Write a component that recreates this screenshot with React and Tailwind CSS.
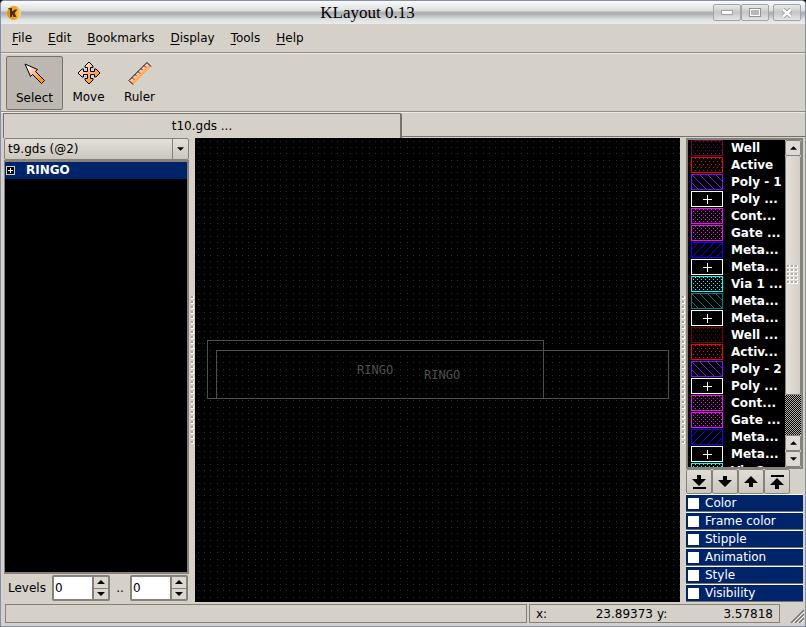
import React from "react";

const MENUS = ["File", "Edit", "Bookmarks", "Display", "Tools", "Help"];

const LAYERS = [
  { name: "Well", color: "#6a0848", fill: "sparse" },
  { name: "Active", color: "#ff0000", fill: "sparse" },
  { name: "Poly - 1", color: "#7a10ff", fill: "back" },
  { name: "Poly ...", color: "#ffffff", fill: "plus" },
  { name: "Cont...", color: "#ff00ff", fill: "dense" },
  { name: "Gate ...", color: "#ff00ff", fill: "dense" },
  { name: "Meta...", color: "#1400ff", fill: "forward" },
  { name: "Meta...", color: "#ffffff", fill: "plus" },
  { name: "Via 1 ...", color: "#00ffff", fill: "dense" },
  { name: "Meta...", color: "#008080", fill: "back" },
  { name: "Meta...", color: "#ffffff", fill: "plus" },
  { name: "Well ...", color: "#780000", fill: "sparse" },
  { name: "Activ...", color: "#ff0000", fill: "sparse" },
  { name: "Poly - 2", color: "#7a10ff", fill: "back" },
  { name: "Poly ...", color: "#ffffff", fill: "plus" },
  { name: "Cont...", color: "#ff00ff", fill: "dense" },
  { name: "Gate ...", color: "#ff00ff", fill: "dense" },
  { name: "Meta...", color: "#1400ff", fill: "forward" },
  { name: "Meta...", color: "#ffffff", fill: "plus" },
  { name: "Via 2 ...", color: "#00ffff", fill: "dense" },
];

const SECTIONS = ["Color", "Frame color", "Stipple", "Animation", "Style", "Visibility"];

function Swatch({ id, color, fill }) {
  return (
    <svg width="32" height="16" shapeRendering="crispEdges" className="shrink-0" aria-hidden="true">
      <defs>
        {fill === "sparse" && (
          <pattern id={id} width="4" height="6" patternUnits="userSpaceOnUse">
            <path d="M0 1h1v1h-1zM2 4h1v1h-1z" fill={color} />
          </pattern>
        )}
        {fill === "dense" && (
          <pattern id={id} width="4" height="4" patternUnits="userSpaceOnUse">
            <path d="M0 1h1v1h-1zM2 3h1v1h-1z" fill={color} />
          </pattern>
        )}
        {fill === "back" && (
          <pattern id={id} width="8" height="8" patternUnits="userSpaceOnUse">
            <path d="M0 0h1v1h1v1h1v1h1v1h1v1h1v1h1v1h1v1h-1v-1h-1v-1h-1v-1h-1v-1h-1v-1h-1v-1h-1v-1h-1z" fill={color} />
          </pattern>
        )}
        {fill === "forward" && (
          <pattern id={id} width="8" height="8" patternUnits="userSpaceOnUse">
            <path d="M7 0h1v1h-1v1h-1v1h-1v1h-1v1h-1v1h-1v1h-1v1h-1v-1h1v-1h1v-1h1v-1h1v-1h1v-1h1v-1h1z" fill={color} />
          </pattern>
        )}
      </defs>
      <rect x="0" y="0" width="32" height="16" fill={fill === "plus" ? "#000" : `url(#${id})`} />
      {fill === "plus" && <path d="M12 8h9v1h-9zM16 4h1v9h-1z" fill={color} />}
      <rect x="0.5" y="0.5" width="31" height="15" fill="none" stroke={color} />
    </svg>
  );
}

function Arrow({ up, small }) {
  return (
    <svg width={small ? 7 : 8} height="4" viewBox="0 0 8 4" aria-hidden="true">
      <path d={up ? "M0 4L4 0L8 4z" : "M0 0L4 4L8 0z"} fill="#000" />
    </svg>
  );
}

function Splitter({ id }) {
  return (
    <div className="flex w-1.5 shrink-0 items-center justify-center">
      <svg width="4" height="150" shapeRendering="crispEdges" aria-hidden="true">
        <defs>
          <pattern id={id} width="4" height="5" patternUnits="userSpaceOnUse">
            <rect x="1" y="1" width="3" height="3" fill="#fff" />
            <rect x="1" y="1" width="2" height="2" fill="#a5a19a" />
          </pattern>
        </defs>
        <rect width="4" height="150" fill={`url(#${id})`} />
      </svg>
    </div>
  );
}

function WindowButton({ label, children }) {
  return (
    <button
      aria-label={label}
      className="flex h-[17px] w-7 items-center justify-center rounded-xs border border-[#a2a5a6] bg-linear-to-b from-[#e9ebeb] via-[#c4c6c7] to-[#e4e6e6]"
    >
      {children}
    </button>
  );
}

function ToolButton({ label, active, children }) {
  return (
    <button
      className={
        active
          ? "flex h-[54px] w-[57px] flex-col items-center rounded-xs border border-[#77736c] bg-[#bcb8b1] pt-[5px]"
          : "flex h-[54px] w-[51px] flex-col items-center border border-transparent pt-1"
      }
    >
      {children}
      <span className="mt-1 leading-4">{label}</span>
    </button>
  );
}

function Spin({ label }) {
  return (
    <div className="flex h-[26px] w-[58px] rounded-xs border-2 border-[#86827a] bg-white">
      <input aria-label={label} defaultValue="0" className="w-[38px] min-w-0 bg-white px-px outline-none" />
      <div className="flex flex-1 flex-col border-l-2 border-[#86827a] bg-[#dbd8d2]">
        <button aria-label={`Increase ${label}`} className="flex flex-1 items-center justify-center border-b border-[#86827a]">
          <Arrow up />
        </button>
        <button aria-label={`Decrease ${label}`} className="flex flex-1 items-center justify-center">
          <Arrow />
        </button>
      </div>
    </div>
  );
}

function ScrollButton({ label, up }) {
  return (
    <button
      aria-label={label}
      className="flex h-4 w-full shrink-0 items-center justify-center rounded-xs border border-[#86827a] bg-[#dedbd5]"
    >
      <Arrow up={up} small />
    </button>
  );
}

const MOVES = [
  { label: "Move to bottom", d: "M6 0h4v4h5l-7 7l-7-7h5zM2 12h13v2h-13z" },
  { label: "Move down", d: "M6 1h4v4h5l-7 7l-7-7h5z" },
  { label: "Move up", d: "M8 1l7 7h-5v4h-4v-4h-5z" },
  { label: "Move to top", d: "M2 0h13v2h-13zM8 3l7 7h-5v4h-4v-4h-5z" },
];

export default function App() {
  return (
    <div className="h-screen w-full bg-black font-['DejaVu_Sans',sans-serif] text-xs text-black">
      <div className="flex h-full w-full flex-col overflow-hidden rounded-t-sm border border-[#858fa9] bg-[#d5d1c9]">
        <header className="flex h-[23px] shrink-0 items-center bg-[linear-gradient(to_bottom,#fafbfb_0%,#dcdedf_42%,#b0b2b4_48%,#adafb1_56%,#dfe2e3_80%,#e9ecec_100%)] pr-1 pl-[5px]">
          <svg width="16" height="16" viewBox="0 0 16 16" aria-hidden="true">
            <defs>
              <linearGradient id="logo">
                <stop offset="0" stopColor="#f08c00" />
                <stop offset="0.6" stopColor="#f5a51c" />
                <stop offset="1" stopColor="#f4dc98" />
              </linearGradient>
            </defs>
            <circle cx="8" cy="8" r="7" fill="url(#logo)" />
            <path d="M2 3h4v3.500l3-2h2.500l-3 3.500l2 4h-3l-1.500-3v3h-2v-7z" fill="#40321a" />
          </svg>
          <h1 className="flex-1 text-center font-['Liberation_Serif',serif] text-[17px] leading-5">KLayout 0.13</h1>
          <div className="flex">
            <WindowButton label="Minimize">
              <svg width="12" height="5"><rect x="0.500" y="0.500" width="11" height="4" fill="#fff" stroke="#a0a0a0" /></svg>
            </WindowButton>
            <WindowButton label="Maximize">
              <svg width="12" height="9">
                <rect x="1" y="1" width="10" height="7" fill="none" stroke="#8f9192" strokeWidth="2" />
                <rect x="1.500" y="1.500" width="9" height="6" fill="#b5b7b8" stroke="#fff" />
              </svg>
            </WindowButton>
            <div className="pl-1">
              <WindowButton label="Close">
                <svg width="12" height="10" viewBox="0 0 12 10">
                  <path d="M2 1.500L10 8.500M10 1.500L2 8.500" stroke="#8f9192" strokeWidth="4" />
                  <path d="M2 1.500L10 8.500M10 1.500L2 8.500" stroke="#fff" strokeWidth="2.400" />
                </svg>
              </WindowButton>
            </div>
          </div>
        </header>

        <nav className="flex h-[29px] shrink-0 items-center border-b border-[#918e86] pl-[3px]">
          {MENUS.map((m) => (
            <button key={m} className="px-2 leading-4">
              <span className="underline underline-offset-2">{m[0]}</span>
              {m.slice(1)}
            </button>
          ))}
        </nav>

        <div className="flex h-[59px] shrink-0 items-center border-t border-b border-t-[#eeebe5] border-b-[#918e86] pl-[5px]">
          <ToolButton label="Select" active>
            <svg width="24" height="24" viewBox="0 0 24 24" aria-hidden="true">
              <defs>
                <linearGradient id="warm" x1="0" y1="0" x2="1" y2="1">
                  <stop offset="0.150" stopColor="#fff4f0" />
                  <stop offset="0.500" stopColor="#ffb092" />
                  <stop offset="0.800" stopColor="#ff9c00" />
                </linearGradient>
              </defs>
              <path d="M2 2L14.500 7.500L12.500 9.500L21.500 18.500L18.500 21.500L9.500 12.500L7.500 14.500z" fill="url(#warm)" stroke="#000" />
            </svg>
          </ToolButton>
          <ToolButton label="Move">
            <svg width="24" height="24" viewBox="0 0 24 24" aria-hidden="true">
              <path
                d="M12 1L16 5V6.500H13.500V10.500H17.500V8H19L23 12L19 16H17.500V13.500H13.500V17.500H16V19L12 23L8 19V17.500H10.500V13.500H6.500V16H5L1 12L5 8H6.500V10.500H10.500V6.500H8V5z"
                fill="url(#warm)"
                stroke="#000"
              />
            </svg>
          </ToolButton>
          <ToolButton label="Ruler">
            <svg width="24" height="24" viewBox="0 0 24 24" aria-hidden="true">
              <defs>
                <linearGradient id="rule" x1="0.350" y1="0.350" x2="0.650" y2="0.650">
                  <stop offset="0" stopColor="#fff0ea" />
                  <stop offset="0.500" stopColor="#ffb48c" />
                  <stop offset="1" stopColor="#ff9c00" />
                </linearGradient>
              </defs>
              <path d="M19 1.500L23 5.500L5 23.500L1 19.500z" fill="url(#rule)" />
              <path d="M5 23.500L1 19.500L19 1.500L23 5.500" fill="none" stroke="#000" />
              <path d="M4 16.500l2 2M7 13.500l1.500 1.500M10 10.500l2 2M13 7.500l1.500 1.500M16 4.500l2 2" stroke="#000" strokeWidth="0.800" />
            </svg>
          </ToolButton>
        </div>

        <div className="flex h-[26px] shrink-0 border-t border-[#eeebe5] pl-0.5">
          <button className="w-[399px] rounded-tr-xs border-t border-r-2 border-l border-[#77736c] leading-4">t10.gds ...</button>
          <div className="mb-px flex-1 border-b border-[#77736c]" />
        </div>

        <main className="flex min-h-0 flex-1">
          <aside className="flex w-[188px] shrink-0 flex-col pl-[3px]">
            <div className="grid h-[22px] shrink-0 rounded-xs border border-[#86827a] bg-linear-to-b from-[#e3e0da] to-[#cbc7bf]">
              <select aria-label="Layout" className="col-start-1 row-start-1 appearance-none pr-5 pl-[3px] leading-4 outline-none">
                <option>t9.gds (@2)</option>
              </select>
              <span className="pointer-events-none col-start-1 row-start-1 flex w-4 items-center justify-center justify-self-end border-l border-[#86827a]">
                <Arrow small />
              </span>
            </div>
            <div className="min-h-0 flex-1 border-t-2 border-r-2 border-b-2 border-l border-[#86827a] bg-black">
              <button className="flex h-[17px] w-full items-start gap-[11px] bg-[#00246a] pl-px leading-4 font-bold text-white">
                <svg width="9" height="9" shapeRendering="crispEdges" className="mt-1" aria-hidden="true">
                  <rect x="0.500" y="0.500" width="8" height="8" fill="#000" stroke="#d5d1c9" />
                  <path d="M2 4h5v1h-5zM4 2h1v5h-1z" fill="#fff" />
                </svg>
                RINGO
              </button>
            </div>
            <div className="flex h-7 shrink-0 items-center justify-between pr-px pl-1">
              <span>Levels</span>
              <Spin label="from level" />
              <span>..</span>
              <Spin label="to level" />
            </div>
          </aside>

          <Splitter id="grip-left" />

          <svg className="h-full min-w-0 flex-1 bg-black" shapeRendering="crispEdges" role="img" aria-label="Layout view">
            <defs>
              <pattern id="grid" width="19" height="19" patternUnits="userSpaceOnUse">
                <path d="M3 3h1v1h-1zM9 3h1v1h-1zM15 3h1v1h-1zM3 9h1v1h-1zM9 9h1v1h-1zM15 9h1v1h-1zM3 15h1v1h-1zM9 15h1v1h-1zM15 15h1v1h-1z" fill="#303030" />
              </pattern>
            </defs>
            <rect width="100%" height="100%" fill="url(#grid)" />
            <g fill="none" stroke="#505050">
              <rect x="12.500" y="202.500" width="336" height="58" />
              <rect x="21.500" y="212.500" width="452" height="48" />
            </g>
            <g fill="#505050" className="font-['DejaVu_Sans_Mono',monospace] text-xs">
              <text x="162" y="236">RINGO</text>
              <text x="229" y="241">RINGO</text>
            </g>
          </svg>

          <Splitter id="grip-right" />

          <aside className="flex w-[119px] shrink-0 flex-col pr-0.5">
            <div className="flex min-h-0 flex-1 overflow-hidden border-2 border-[#86827a] bg-black">
              <ul className="min-w-0 flex-1 pl-[3px] font-bold text-white">
                {LAYERS.map((l, i) => (
                  <li key={i} className="flex h-[17px] items-start gap-2 overflow-hidden leading-4 whitespace-nowrap">
                    <Swatch id={`stipple-${i}`} color={l.color} fill={l.fill} />
                    {l.name}
                  </li>
                ))}
              </ul>
              <div className="flex w-4 shrink-0 flex-col bg-[#d5d1c9]">
                <ScrollButton label="Scroll up" up />
                <div className="flex flex-1 items-center justify-center rounded-xs border-x border-b border-[#86827a] bg-linear-to-r from-[#e3e0da] to-[#d3cfc7]">
                  <svg width="12" height="20" shapeRendering="crispEdges" aria-hidden="true">
                    <defs>
                      <pattern id="thumb" width="4" height="4" patternUnits="userSpaceOnUse">
                        <rect width="3" height="3" fill="#fff" />
                        <rect width="2" height="2" fill="#b0aca5" />
                      </pattern>
                    </defs>
                    <rect width="12" height="20" fill="url(#thumb)" />
                  </svg>
                </div>
                <svg width="16" height="40" shapeRendering="crispEdges" className="shrink-0" aria-hidden="true">
                  <defs>
                    <pattern id="trough" width="2" height="2" patternUnits="userSpaceOnUse">
                      <rect width="2" height="2" fill="#000" />
                      <path d="M0 0h1v1h-1zM1 1h1v1h-1z" fill="#b5b1aa" />
                    </pattern>
                  </defs>
                  <rect width="16" height="40" fill="url(#trough)" />
                </svg>
                <ScrollButton label="Page up" up />
                <ScrollButton label="Scroll down" />
              </div>
            </div>
            <div className="flex h-[25px] shrink-0">
              {MOVES.map((m) => (
                <button
                  key={m.label}
                  aria-label={m.label}
                  className="flex w-[26px] items-center justify-center rounded-xs border border-[#86827a] bg-linear-to-b from-[#e0ddd7] to-[#cbc7bf]"
                >
                  <svg width="16" height="14" aria-hidden="true">
                    <path d={m.d} fill="#000" />
                  </svg>
                </button>
              ))}
            </div>
            <div className="shrink-0">
              {SECTIONS.map((s) => (
                <label key={s} className="flex h-[18px] items-center gap-1.5 border-t border-b border-t-white border-b-[#77736c] bg-[#00246a] pl-0.5 leading-4 text-white">
                  <input type="checkbox" className="size-[11px] appearance-none bg-white checked:bg-[#86827a]" />
                  {s}
                </label>
              ))}
            </div>
          </aside>
        </main>

        <footer className="flex h-6 shrink-0 gap-0.5 pt-0.5 pb-[3px] pl-1">
          <div className="flex-1 border border-[#86827a]" />
          <div className="flex w-[251px] items-center border border-[#86827a] px-1.5 leading-4">
            <span>x:</span>
            <span className="flex-1 text-right">23.89373</span>
            <span className="pl-1">y:</span>
            <span className="flex-1 text-right">3.57818</span>
          </div>
          <div className="flex w-[23px] items-end justify-end pr-px">
            <svg width="14" height="14" aria-hidden="true">
              <path d="M1 14L14 1M5 14L14 5M9 14L14 9" stroke="#77736c" strokeWidth="1.500" />
              <path d="M3 14L14 3M7 14L14 7M11 14L14 11" stroke="#fff" />
            </svg>
          </div>
        </footer>
      </div>
    </div>
  );
}
